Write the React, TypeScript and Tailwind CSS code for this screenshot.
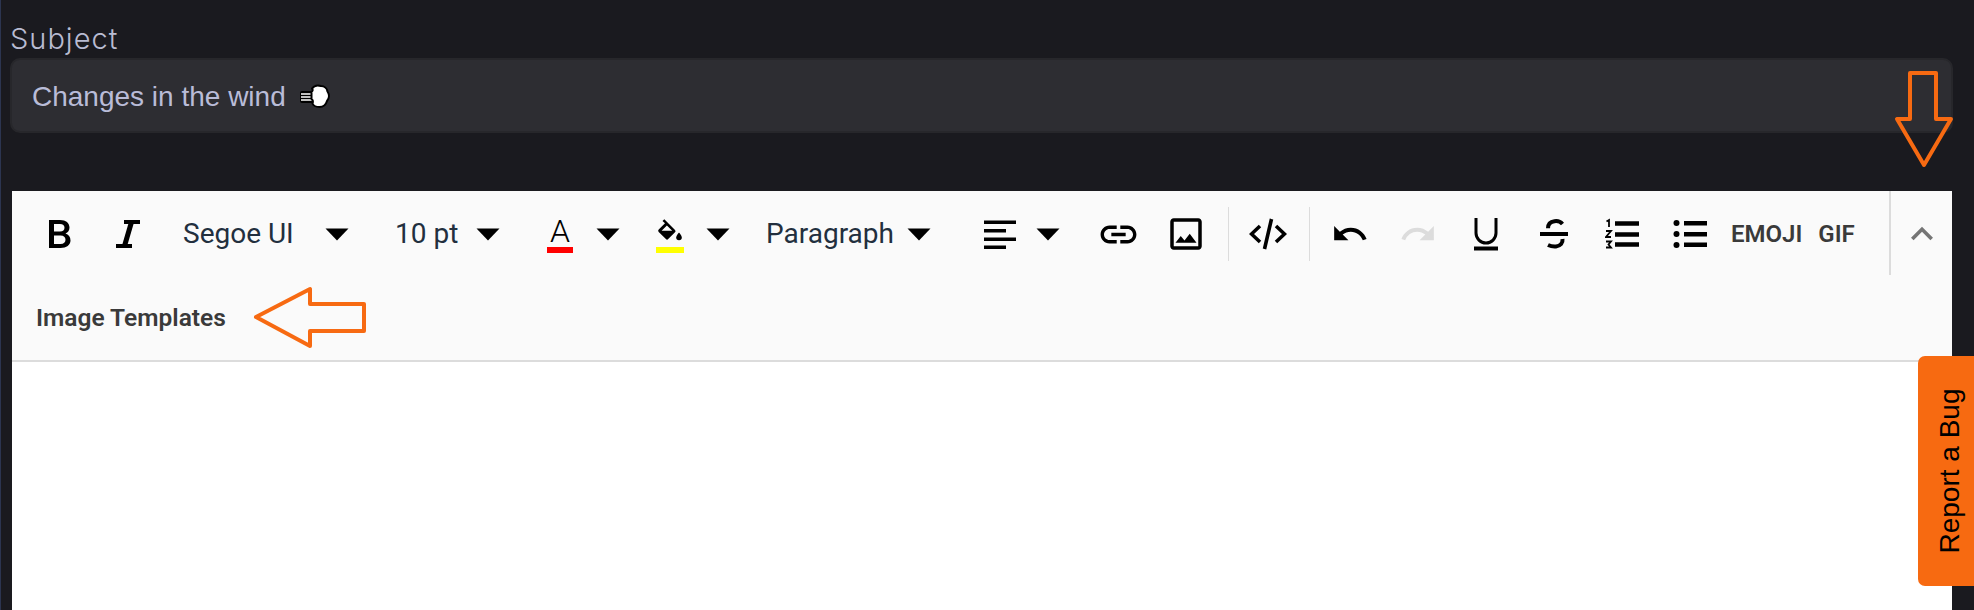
import type { ReactNode } from 'react';
import { MdKeyboardArrowUp, MdLink, MdOutlineImage, MdRedo, MdUndo } from 'react-icons/md';

function Caret() {
  return (
    <svg viewBox="0 0 34 34" className="w-[34px] h-[34px] shrink-0 text-black" fill="currentColor">
      <path d="M5.500 11.500h23L17 23.500z" />
    </svg>
  );
}

function IconButton({ children }: { children: ReactNode }) {
  return <div className="w-[68px] h-[34px] flex items-center justify-center text-black shrink-0">{children}</div>;
}

function Divider() {
  return <div className="w-px h-[54px] bg-[#dcdcdc] shrink-0" />;
}

function Select({ label, className }: { label: string; className: string }) {
  return (
    <div className={`flex items-center justify-between shrink-0 text-[28px] text-[#222f3e] ${className}`}>
      <span className="leading-none">{label}</span>
      <Caret />
    </div>
  );
}

function BoldIcon() {
  return (
    <svg viewBox="0 0 22 28" className="w-[22px] h-[28px] ml-[2px]" fill="currentColor" fillRule="evenodd">
      <path d="M0 0h11c6 0 9.500 3 9.500 7.500 0 3-1.500 5-4 6 3 1 5 3.500 5 7 0 4.500-4 7.500-10 7.500H0zM5 4v7.500h6c3 0 4.500-1.500 4.500-3.800S14 4 11 4zM5 15.500V24h6.500c3.300 0 5-1.600 5-4.200s-1.700-4.300-5-4.300z" />
    </svg>
  );
}

function ItalicIcon() {
  return (
    <svg viewBox="0 0 24 28" className="w-[24px] h-[28px]" fill="none" stroke="currentColor">
      <path d="M8 2h16M0 26h16" strokeWidth="4" />
      <path d="M15.500 2L8.500 26" strokeWidth="5" />
    </svg>
  );
}

function AlignLeftIcon() {
  return (
    <svg viewBox="0 0 34 34" className="w-[34px] h-[34px] text-black" fill="currentColor">
      <path d="M1 3.500h32v3.400H1zM1 12h22v3.400H1zM1 20.500h32v3.400H1zM1 28.500h22v3.400H1z" />
    </svg>
  );
}

function CodeIcon() {
  return (
    <svg viewBox="0 0 38 34" className="w-[38px] h-[34px]" fill="none" stroke="currentColor" strokeWidth="3.600">
      <path d="M11 9l-8.500 8 8.500 8M27 9l8.500 8-8.500 8M22.500 2l-7 30" />
    </svg>
  );
}

function UnderlineIcon() {
  return (
    <svg viewBox="0 0 26 34" className="w-[26px] h-[34px]" fill="none" stroke="currentColor">
      <path d="M3 1v15a10 10 0 0 0 20 0V1" strokeWidth="3" />
      <path d="M1 31.500h24" strokeWidth="4" />
    </svg>
  );
}

function StrikeIcon() {
  return (
    <svg viewBox="0 0 30 34" className="w-[30px] h-[34px]" fill="none" stroke="currentColor">
      <path d="M1 17h28" strokeWidth="4" />
      <path d="M23.500 7c-2-2.300-5-3.300-8-2.800-4 .6-6.500 3-6.500 7" strokeWidth="4" />
      <path d="M23.500 22c.5 4-2 7-6.500 7.500-3 .3-5.500-.3-8-1.500" strokeWidth="4" />
    </svg>
  );
}

function NumberedListIcon() {
  return (
    <svg viewBox="0 0 34 34" className="w-[34px] h-[34px]" fill="none" stroke="currentColor">
      <path d="M10 6.500h24M10 17.500h24M10 27.500h24" strokeWidth="4.500" />
      <path d="M1.500 4.500l2.500-1.500v7M1 14h5l-5 6h5M1 24.500h5l-2.500 3 2.500 3H1" strokeWidth="1.800" />
    </svg>
  );
}

function BulletListIcon() {
  return (
    <svg viewBox="0 0 34 34" className="w-[34px] h-[34px]" fill="currentColor">
      <circle cx="3.500" cy="6" r="3" />
      <circle cx="3.500" cy="17" r="3" />
      <circle cx="3.500" cy="28" r="3" />
      <path d="M11 4h23v4.500H11zM11 15h23v4.500H11zM11 25.500h23V30H11z" />
    </svg>
  );
}

function BucketIcon() {
  return (
    <svg viewBox="0 0 26 26" className="w-[26px] h-[26px]" fill="currentColor" fillRule="evenodd">
      <path d="M5.500 2l1.800-1.800L18 11a1.600 1.600 0 0 1 0 2.300l-6.800 6.800a1.600 1.600 0 0 1-2.300 0l-7.200-7.200a1.600 1.600 0 0 1 0-2.300l6.300-6.300zM9.900 6.500L4.600 11.800h10.600z" />
      <path d="M22 13.500s-2.800 3-2.800 5a2.800 2.800 0 0 0 5.600 0c0-2-2.800-5-2.800-5z" />
    </svg>
  );
}

function WindPuff() {
  return (
    <svg viewBox="0 0 32 26" className="w-[32px] h-[26px] ml-[13px]">
      <rect x="1" y="7" width="14" height="12" rx="2" fill="#000" />
      <path d="M2 10h13M2 13h13M2 16h13" stroke="#fff" strokeWidth="1.500" />
      <path
        d="M13 4.500c2-3 6-3.500 9-2.500 3.500 0 6 2.500 6.500 5.500 2 3 1.800 7-.5 9.500-1 3.500-4 6-7.500 6-3.500 0-6-1-7-3.500 1-2.500.5-3.500-1-4.500v-7c1.500-1 1.500-2.500.5-3.500z"
        fill="#fff"
        stroke="#000"
        strokeWidth="2"
        strokeLinejoin="round"
      />
    </svg>
  );
}

export default function App() {
  return (
    <div className="relative w-[1974px] h-[610px] overflow-hidden bg-[#1a1a1f] border-l border-[#2c3550] font-['Liberation_Sans',sans-serif]">
      <div className="pl-[9px] pr-[21px] pt-[20px]">
        <label className="block text-[29px] leading-[38px] tracking-[1px] text-[#b9bcd2] font-['Inter',sans-serif] font-light">
          Subject
        </label>
        <div className="h-[75px] rounded-[10px] border-2 border-[#27272b] bg-[#2d2d32] pl-[20px] pt-[3px] flex items-center text-[28px] text-[#b9bcd8]">
          Changes in the wind
          <WindPuff />
        </div>
      </div>

      <div className="ml-[11px] mr-[22px] mt-[58px] h-[419px] bg-white font-['Roboto',sans-serif]">
        <div className="bg-[#fafafa] border-b-2 border-[#dcdcdc] h-[171px]">
          <div className="h-[84px] pt-[2px] flex items-center pl-[13px] relative">
            <IconButton><BoldIcon /></IconButton>
            <div className="w-[70px] h-[34px] flex items-center justify-center text-black shrink-0"><ItalicIcon /></div>
            <Select label="Segoe UI" className="w-[200px] pl-[20px] pr-[9px]" />
            <Select label="10 pt" className="w-[151px] pl-[32px] pr-[9px]" />
            <div className="w-[121px] pl-[29px] flex items-center gap-[14px] shrink-0">
              <div className="w-[34px] h-[38px] flex flex-col items-center text-black">
                <span className="text-[32px] leading-[32px] font-light">A</span>
                <span className="w-[26px] h-[6px] bg-[#ff0000]" />
              </div>
              <Caret />
            </div>
            <div className="w-[111px] pl-[18px] flex items-center gap-[14px] shrink-0">
              <div className="w-[34px] h-[38px] pt-[4px] flex flex-col items-center text-black">
                <BucketIcon />
                <span className="w-[28px] h-[6px] bg-[#ffff00] mt-[2px]" />
              </div>
              <Caret />
            </div>
            <Select label="Paragraph" className="w-[200px] pl-[20px] pr-[10px]" />
            <div className="w-[129px] pl-[37px] flex items-center gap-[14px] shrink-0">
              <AlignLeftIcon />
              <Caret />
            </div>
            <div className="ml-[9px] flex items-center">
              <IconButton><MdLink size={43} /></IconButton>
              <IconButton><MdOutlineImage size={42} /></IconButton>
            </div>
            <div className="ml-[8px]"><Divider /></div>
            <div className="ml-[5px]"><IconButton><CodeIcon /></IconButton></div>
            <div className="ml-[7px]"><Divider /></div>
            <div className="ml-[6px] flex items-center">
              <IconButton><MdUndo size={38} /></IconButton>
              <IconButton><span className="text-[#dcdcdc]"><MdRedo size={38} /></span></IconButton>
              <IconButton><UnderlineIcon /></IconButton>
              <IconButton><StrikeIcon /></IconButton>
              <IconButton><NumberedListIcon /></IconButton>
              <IconButton><BulletListIcon /></IconButton>
            </div>
            <div className="ml-[7px] flex items-center gap-[16px] text-[24px] font-semibold text-[#3a3a3a] leading-none">
              <span>EMOJI</span>
              <span>GIF</span>
            </div>
            <div className="absolute right-0 top-0 h-[84px] pt-[2px] w-[63px] border-l-2 border-[#dcdcdc] flex items-center justify-center text-[#757575]">
              <MdKeyboardArrowUp size={44} />
            </div>
          </div>
          <div className="h-[85px] pt-[1px] flex items-center pl-[24px] text-[24.500px] font-semibold text-[#3a3a3a]">
            Image Templates
          </div>
        </div>
      </div>

      {/* annotation arrows drawn over the shot */}
      <svg className="absolute left-[-1px] top-0 pointer-events-none" width="1974" height="610" fill="none" stroke="#f76a12" strokeWidth="4" strokeLinejoin="round">
        <path d="M256 317l54-28v15h54v27h-54v15z" />
        <path d="M1910 73h26v46h15l-27 46-27-46h13z" />
      </svg>

      <div className="absolute right-0 top-[356px] h-[230px] w-[56px] rounded-l-[7px] bg-[#f76a11] pl-[6px] flex items-center justify-center">
        <span className="-rotate-90 whitespace-nowrap text-[28px] text-black">Report a Bug</span>
      </div>
    </div>
  );
}
